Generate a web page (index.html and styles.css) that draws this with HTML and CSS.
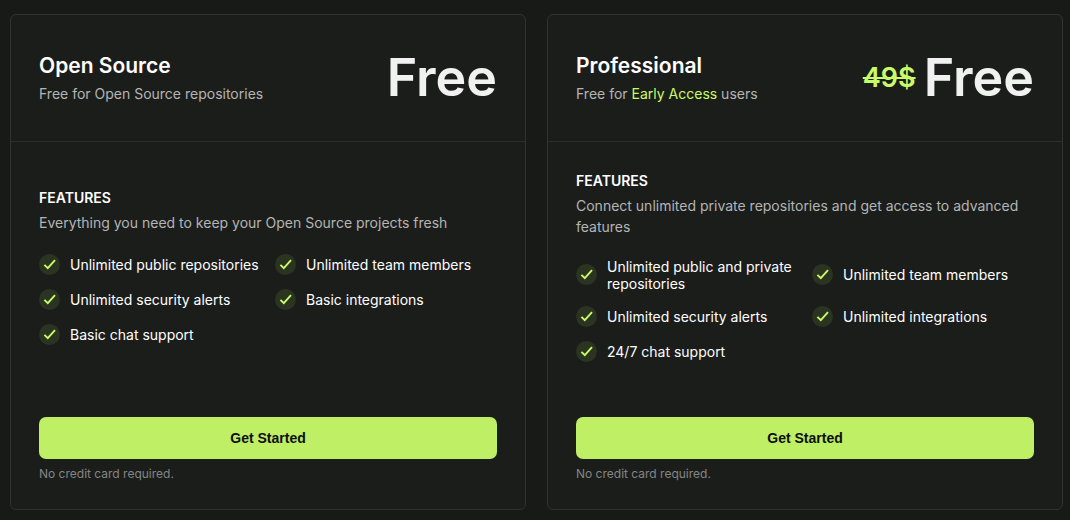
FILE: index.html
```html
<!DOCTYPE html>
<html lang="en">
<head>
  <meta charset="UTF-8">
  <meta name="viewport" content="width=device-width, initial-scale=1.0">
  <title>Pricing</title>
  <link rel="stylesheet" href="styles.css">
</head>
<body>
  <svg class="sprite" aria-hidden="true">
    <symbol id="check" viewBox="0 0 21 21">
      <circle cx="10.5" cy="10.5" r="10.5" fill="#2a3421"/>
      <path d="M5.4 10.8 8.8 14.2 16 6.2" fill="none" stroke="#c9fb68" stroke-width="1.9"/>
    </symbol>
  </svg>

  <main class="plans">
    <section class="card">
      <header class="card-header">
        <div>
          <h2>Open Source</h2>
          <p class="subtitle">Free for Open Source repositories</p>
        </div>
        <div class="price">Free</div>
      </header>
      <div class="card-body">
        <div class="features">
          <h3>FEATURES</h3>
          <p class="description">Everything you need to keep your Open Source projects fresh</p>
          <ul>
            <li><svg class="check"><use href="#check"/></svg><span>Unlimited public repositories</span></li>
            <li><svg class="check"><use href="#check"/></svg><span>Unlimited team members</span></li>
            <li><svg class="check"><use href="#check"/></svg><span>Unlimited security alerts</span></li>
            <li><svg class="check"><use href="#check"/></svg><span>Basic integrations</span></li>
            <li><svg class="check"><use href="#check"/></svg><span>Basic chat support</span></li>
          </ul>
        </div>
        <button type="button" class="btn">Get Started</button>
        <p class="note">No credit card required.</p>
      </div>
    </section>

    <section class="card">
      <header class="card-header">
        <div>
          <h2>Professional</h2>
          <p class="subtitle">Free for <span class="highlight">Early Access</span> users</p>
        </div>
        <div class="price"><s class="old-price">49$</s>Free</div>
      </header>
      <div class="card-body">
        <div class="features">
          <h3>FEATURES</h3>
          <p class="description">Connect unlimited private repositories and get access to advanced features</p>
          <ul>
            <li><svg class="check"><use href="#check"/></svg><span>Unlimited public and private repositories</span></li>
            <li><svg class="check"><use href="#check"/></svg><span>Unlimited team members</span></li>
            <li><svg class="check"><use href="#check"/></svg><span>Unlimited security alerts</span></li>
            <li><svg class="check"><use href="#check"/></svg><span>Unlimited integrations</span></li>
            <li><svg class="check"><use href="#check"/></svg><span>24/7 chat support</span></li>
          </ul>
        </div>
        <button type="button" class="btn">Get Started</button>
        <p class="note">No credit card required.</p>
      </div>
    </section>
  </main>
</body>
</html>
```
FILE: styles.css
```css
* {
  box-sizing: border-box;
}

body {
  margin: 0;
  min-height: 100vh;
  background-color: #181a18;
  color: #ffffff;
  font-family: Inter, "Liberation Sans", sans-serif;
  font-size: 14px;
  display: flex;
}

h2, h3, p, ul {
  margin: 0;
  padding: 0;
}

.sprite {
  position: absolute;
  width: 0;
  height: 0;
}

.plans {
  flex: 1;
  display: grid;
  grid-template-columns: 1fr 1fr;
  gap: 21px;
  padding: 14px 7px 10px 10px;
}

.card {
  display: flex;
  flex-direction: column;
  background-color: #1b1d1b;
  border: 1px solid #30332f;
  border-radius: 6px;
}

.card-header {
  display: flex;
  justify-content: space-between;
  align-items: center;
  padding: 28px;
  height: 127px;
  border-bottom: 1px solid #2b2e2b;
}

h2 {
  font-size: 21px;
  font-weight: 600;
  line-height: 28px;
  margin-bottom: 3px;
}

.subtitle {
  color: #b4b5b4;
  line-height: 21px;
}

.highlight {
  color: #c9fb68;
}

.price {
  display: flex;
  align-items: center;
  gap: 8px;
  color: #f1f1f1;
  font-size: 52px;
  font-weight: 600;
  line-height: 64px;
}

.old-price {
  color: #c9fb68;
  font-size: 27px;
}

.card-body {
  flex: 1;
  display: flex;
  flex-direction: column;
  padding: 0 28px 28px;
}

.features {
  flex: 1;
  display: flex;
  flex-direction: column;
  justify-content: center;
  padding-bottom: 28px;
}

h3 {
  font-size: 14px;
  font-weight: 600;
  line-height: 21px;
  margin-bottom: 4px;
}

.description {
  color: #b4b5b4;
  line-height: 21px;
  margin-bottom: 21px;
}

ul {
  list-style: none;
  display: grid;
  grid-template-columns: 1fr 1fr;
  gap: 14px;
}

li {
  display: flex;
  align-items: center;
  gap: 10px;
  line-height: 17px;
}

.check {
  flex: none;
  width: 21px;
  height: 21px;
}

.btn {
  height: 42px;
  border: none;
  border-radius: 7px;
  background-color: #bfef65;
  color: #0d0f0c;
  font-family: "Liberation Sans", Arial, sans-serif;
  font-size: 14px;
  font-weight: 700;
  cursor: pointer;
}

.btn:hover {
  background-color: #c9fb68;
}

.note {
  margin-top: 7px;
  color: #848684;
  font-size: 12px;
  line-height: 15px;
}

@media (max-width: 760px) {
  .plans {
    grid-template-columns: 1fr;
  }
}
```
